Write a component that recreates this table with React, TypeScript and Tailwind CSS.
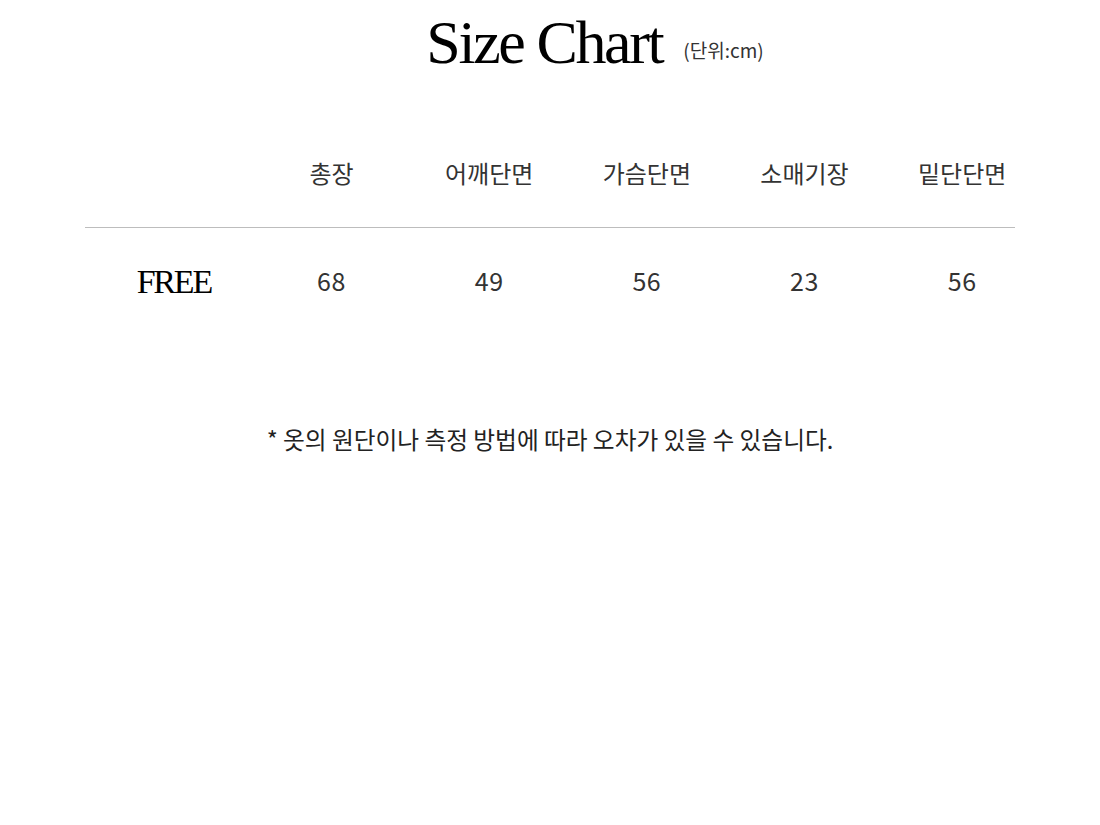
const kr = "font-['Noto_Sans_CJK_KR','Noto_Sans',sans-serif]";
const serif = "font-['Liberation_Serif',serif]";

const columns = ["총장", "어깨단면", "가슴단면", "소매기장", "밑단단면"];
const rows = [{ size: "FREE", values: ["68", "49", "56", "23", "56"] }];

export default function App() {
  return (
    <div className="w-[1100px] h-[825px] bg-white text-[#222]">
      {/* Title */}
      <div className="flex items-end justify-center pt-[12px] pl-[90px]">
        <h1 className={`${serif} text-[62px] leading-[60px] tracking-[-2.4px] text-black`}>Size Chart</h1>
        <span className={`${kr} text-[19px] leading-none ml-[21px] mb-[13px] text-[#333]`}>(단위:cm)</span>
      </div>

      {/* Table head */}
      <div className="grid grid-cols-6 w-[946px] ml-[95px] mt-[85px]">
        <div />
        {columns.map((c) => (
          <div key={c} className={`${kr} text-center text-[24px] leading-[32px] text-[#333]`}>
            {c}
          </div>
        ))}
      </div>

      <div className="w-[930px] ml-[85px] mt-[38px] border-t border-[#bdbdbd]" />

      {/* Table body */}
      {rows.map((r) => (
        <div key={r.size} className="grid grid-cols-6 w-[946px] ml-[95px] mt-[32px] items-center">
          <div className={`${serif} text-center text-[34px] leading-[36px] pt-[4px] tracking-[-2.2px] text-black`}>{r.size}</div>
          {r.values.map((v, i) => (
            <div key={i} className={`${kr} text-center text-[25px] leading-[36px] tracking-[0.5px] text-[#333]`}>
              {v}
            </div>
          ))}
        </div>
      ))}

      {/* Note */}
      <p className={`${kr} text-center text-[23.7px] leading-[32px] mt-[123px] text-[#222]`}>
        * 옷의 원단이나 측정 방법에 따라 오차가 있을 수 있습니다.
      </p>
    </div>
  );
}
